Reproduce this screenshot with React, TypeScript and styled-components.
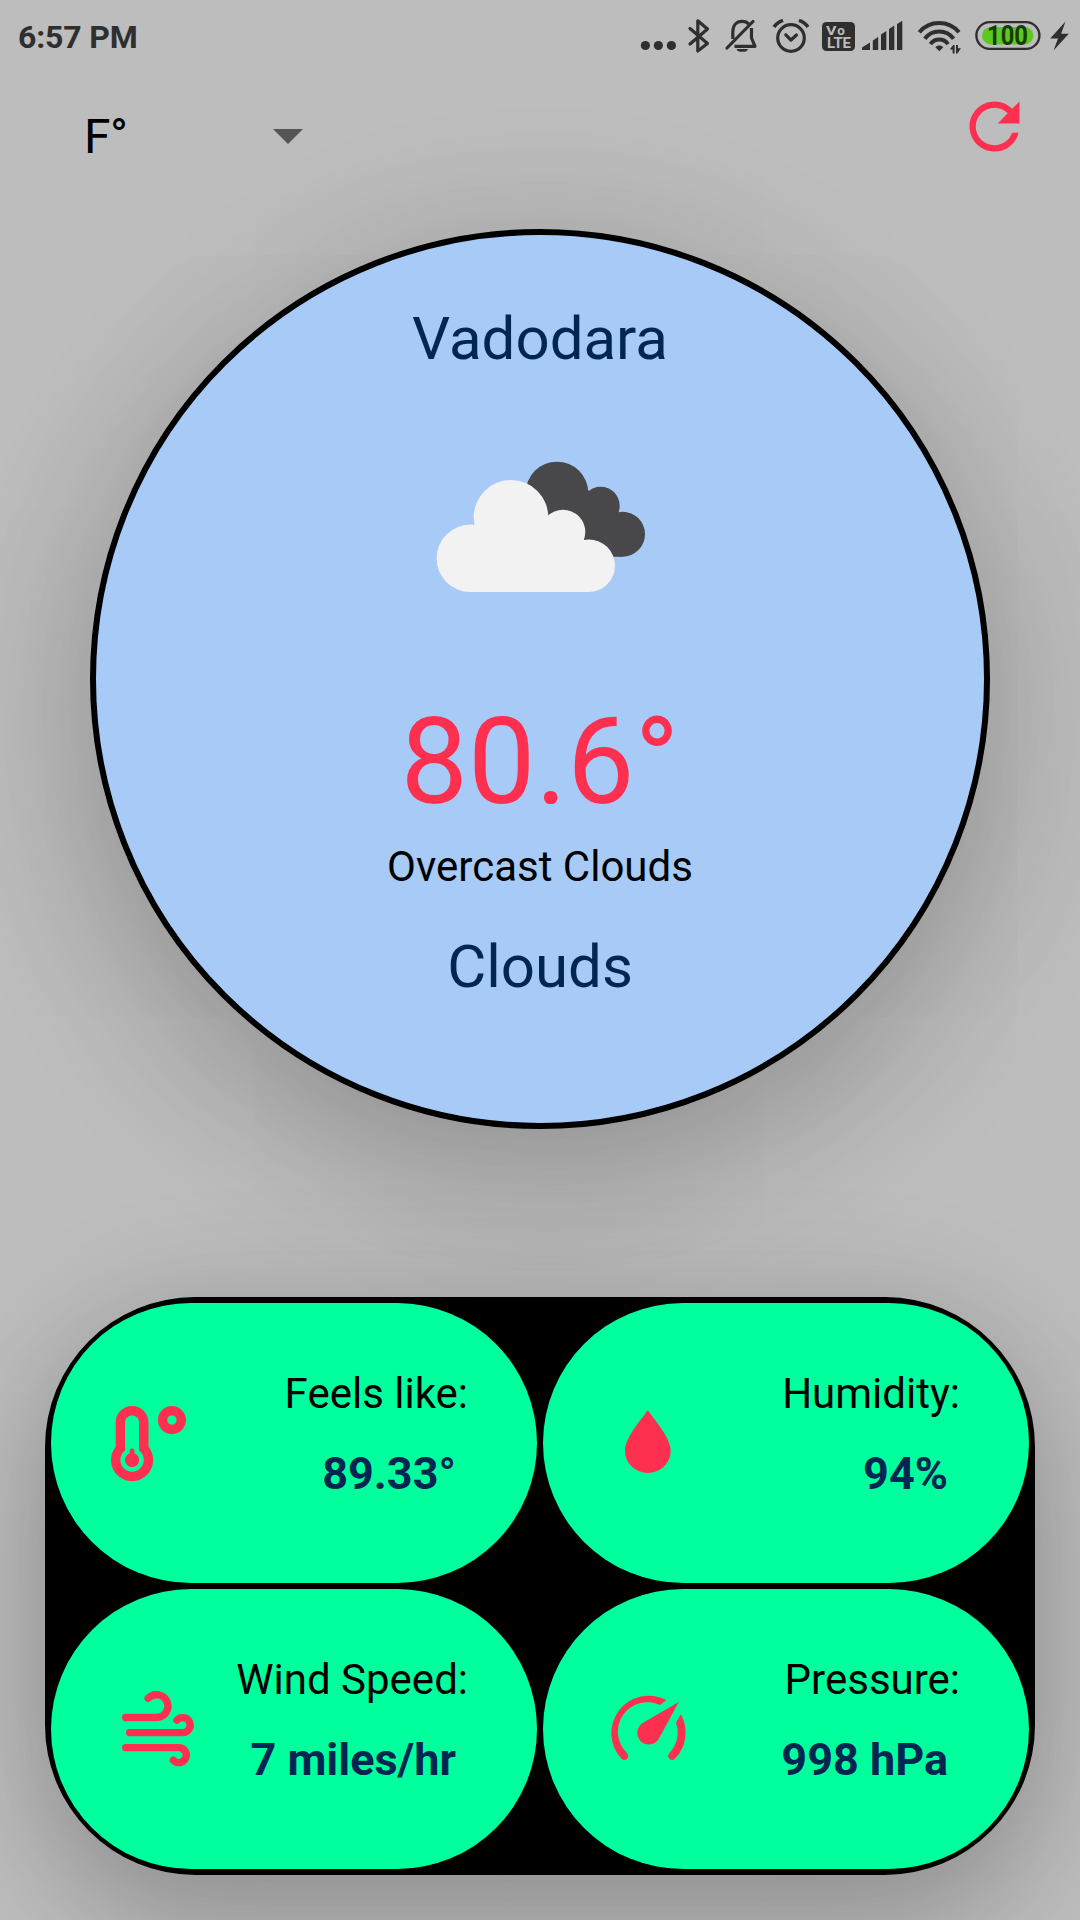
import React from "react";
import styled, { createGlobalStyle } from "styled-components";
import { MdArrowDropDown, MdRefresh } from "react-icons/md";
import { FaTemperatureLow } from "react-icons/fa";

const INK = "#2f2f2f";
const RED = "#ff304f";
const NAVY = "#002651";

const GlobalStyle = createGlobalStyle`
  * { box-sizing: border-box; }
  body { margin: 0; background: #bdbdbd; }
  svg { display: block; flex: none; }
`;

const Screen = styled.div`
  width: 1080px;
  height: 1920px;
  overflow: hidden;
  background: #bdbdbd;
  color: #000;
  font-family: Roboto, "Noto Sans", sans-serif;
  display: flex;
  flex-direction: column;
`;

const StatusBar = styled.header`
  height: 72px;
  padding: 0 11px 0 18px;
  display: flex;
  align-items: center;
  justify-content: space-between;
  color: ${INK};
`;

const Clock = styled.span`
  font-size: 32px;
  line-height: 38px;
  font-weight: 700;
  letter-spacing: -0.15px;
  padding-top: 1px;
`;

const StatusIcons = styled.div`
  display: flex;
  align-items: center;
`;

const Toolbar = styled.div`
  height: 157px;
  padding: 17px 48px 0 84px;
  display: flex;
  justify-content: space-between;
  align-items: flex-start;
`;

const UnitSelect = styled.button`
  width: 240px;
  height: 72px;
  margin-top: 10px;
  padding: 0;
  border: 0;
  background: none;
  display: flex;
  align-items: center;
  justify-content: space-between;
  font: inherit;
  font-size: 48px;
  line-height: 56px;
  color: #000;
`;

const Unit = styled.span`
  padding-top: 3px;
  letter-spacing: -0.5px;
`;

const RefreshButton = styled.button`
  padding: 0;
  border: 0;
  background: none;
  color: ${RED};
`;

const Disc = styled.main`
  width: 900px;
  height: 900px;
  flex: none;
  align-self: center;
  border: 6px solid #000;
  border-radius: 50%;
  background: #a7caf7;
  box-shadow: 0 60px 160px rgba(0, 0, 0, 0.16), 0 10px 160px rgba(0, 0, 0, 0.11);
  display: flex;
  flex-direction: column;
  align-items: center;
  padding-top: 69px;
`;

const Title = styled.div`
  font-size: 60px;
  line-height: 70px;
  color: ${NAVY};
`;

const Temperature = styled.div`
  font-size: 120px;
  line-height: 140px;
  margin-top: 15px;
  color: ${RED};
`;

const Description = styled.div`
  font-size: 42px;
  line-height: 49px;
  margin: 10px 0 41px;
`;

const Panel = styled.section`
  width: 990px;
  height: 578px;
  flex: none;
  align-self: center;
  margin-top: 168px;
  padding: 6px;
  background: #000;
  border-radius: 150px;
  box-shadow: 0 65px 120px rgba(0, 0, 0, 0.16), 0 0 120px rgba(0, 0, 0, 0.13);
  display: grid;
  grid-template-columns: 1fr 1fr;
  grid-template-rows: 1fr 1fr;
  gap: 6px;
`;

const Tile = styled.article`
  border-radius: 140px;
  background: #00ff9d;
  padding-right: 69px;
  display: flex;
  align-items: center;
  justify-content: space-between;
`;

const TileIcon = styled.div<{ $inset: number }>`
  margin-left: ${(p) => p.$inset}px;
  color: ${RED};
`;

const TileText = styled.div`
  display: flex;
  flex-direction: column;
  align-items: flex-end;
  align-self: flex-start;
  padding-top: 66px;
  white-space: nowrap;
`;

const Label = styled.div`
  font-size: 42px;
  line-height: 49px;
`;

const Value = styled.div`
  font-size: 45px;
  line-height: 53px;
  font-weight: 700;
  margin: 29px 12px 0 0;
  color: ${NAVY};
`;

/* Status glyphs share one 72px-high coordinate strip, sliced by x range. */
const Glyph = ({ x, w, children }: { x: number; w: number; children: React.ReactNode }) => (
  <svg width={w} height={72} viewBox={`${x} 0 ${w} 72`} fill="none" stroke="none">
    {children}
  </svg>
);

const line = { stroke: INK, strokeWidth: 3.2, strokeLinecap: "round", strokeLinejoin: "round" } as const;

const StatusGlyphs = () => (
  <StatusIcons>
    <Glyph x={640} w={42}>
      <g fill={INK}>
        <circle cx="645.4" cy="45.5" r="4.6" />
        <circle cx="658.4" cy="45.5" r="4.6" />
        <circle cx="671.4" cy="45.5" r="4.6" />
      </g>
    </Glyph>
    <Glyph x={682} w={36}>
      <path {...line} d="M690 28.5 707.5 43.5 697.8 51V20.8L707.5 29 690 44" />
    </Glyph>
    <Glyph x={718} w={48}>
      <path {...line} d="M727 48 753 21.5" />
      <path {...line} strokeLinecap="butt" d="M732.8 39V32C732.8 25.5 736.5 21.4 742 21.4C745 21.4 747.5 22.5 749 24.2M751.5 28V38L755 46.3H734.5" />
      <path fill={INK} d="M736.5 49h11.5a5.8 3.3 0 0 1-11.5 0z" />
    </Glyph>
    <Glyph x={766} w={50}>
      <circle cx="791" cy="38" r="13.3" {...line} />
      <path {...line} d="M785.8 34.8 791 40 796.5 35" />
      <path {...line} strokeWidth={3.6} strokeLinecap="butt" d="M774 27C776 24 779 21.8 783 20.4M799 20.4C803 21.8 806 24 808 27" />
    </Glyph>
    <Glyph x={816} w={42}>
      <rect x="822" y="22" width="33" height="29" rx="4.5" fill={INK} />
      <g fill="#bcbcbc" fontFamily="Roboto, sans-serif" fontWeight="700">
        <text x="826" y="35" fontSize="13.5" textLength="10.5" lengthAdjust="spacingAndGlyphs">V</text>
        <text x="837.2" y="35" fontSize="13.5">o</text>
        <text x="827" y="47.6" fontSize="14" textLength="24" lengthAdjust="spacingAndGlyphs">LTE</text>
      </g>
    </Glyph>
    <Glyph x={858} w={54}>
      <path
        fill={INK}
        d="M862 50V47.5L870 42.5V50zM872.8 50V40.5L878.2 37V50zM881 50V34.5L886.3 31V50zM889 50V29L894.3 25.5V50zM897 50V24L902.3 20.8V50z"
      />
    </Glyph>
    <Glyph x={912} w={56}>
      <g stroke={INK} strokeWidth="4">
        <path d="M919.3 32.3A26 26 0 0 1 959 32.3" />
        <path d="M924.8 38.7A17.9 17.9 0 0 1 953.6 38.7" />
        <path d="M930.5 44.2A10.6 10.6 0 0 1 948 44.2" />
      </g>
      <path fill={INK} d="M935.3 47.3C937.3 44.8 941.3 44.8 943.3 47.3L939.3 51.2z" />
      <path fill={INK} d="M952.6 53.5h2V45h-1.4L949.8 49.5h2.8zM956 45h2v3.2h3L957.4 53.5H956z" />
    </Glyph>
    <Glyph x={968} w={78}>
      <rect x="976.4" y="22.1" width="63" height="26.8" rx="13.4" stroke={INK} strokeWidth="2.4" />
      <rect x="982" y="27" width="51.4" height="17.4" rx="8.7" fill="#5dc820" />
      <text x="987" y="45.2" fontSize="27" fontWeight="700" fontFamily="Roboto, sans-serif" fill="#1b3a0a" textLength="41" lengthAdjust="spacingAndGlyphs">
        100
      </text>
    </Glyph>
    <Glyph x={1046} w={23}>
      <path fill={INK} d="M1065.5 21.5 1050.2 38.5H1058L1053.5 50.5 1068.8 33.7H1061.2z" />
    </Glyph>
  </StatusIcons>
);

const CloudsPicture = () => (
  <svg width={300} height={303} viewBox="390 374 300 303">
    <g fill="#48484a">
      <circle cx="557" cy="493" r="31.3" />
      <circle cx="600.7" cy="505.7" r="19" />
      <circle cx="622.5" cy="534.2" r="22.5" />
      <path d="M540 490H588L612 515 622.5 556.7H560z" />
    </g>
    <g fill="#f2f2f2">
      <circle cx="470.3" cy="558.3" r="33.7" />
      <circle cx="511" cy="517.3" r="37.3" />
      <circle cx="563" cy="532" r="22.3" />
      <circle cx="588.7" cy="565.7" r="26.3" />
      <path d="M470.3 592V540L480 520H560L584 540 588.7 592z" />
    </g>
  </svg>
);

const DropIcon = () => (
  <svg width={80} height={80} viewBox="608 1403 80 80" fill="currentColor">
    <path d="M647.8 1410C653.5 1419 670.7 1437 670.7 1451A22.85 22 0 0 1 625 1451C625 1437 642 1419 647.8 1410z" />
  </svg>
);

const WindIcon = () => (
  <svg width={80} height={80} viewBox="120 1689 80 80" fill="none" stroke="currentColor" strokeWidth={7.4} strokeLinecap="round">
    <path d="M125.7 1717.5H156A11.4 11.4 0 1 0 148.2 1698.3" />
    <path d="M129.6 1732.6H182.6A7.5 7.5 0 1 0 177 1720.2" />
    <path d="M125.7 1747.6H178.8A7.5 7.5 0 1 1 173.3 1760.2" />
  </svg>
);

const GaugeIcon = () => (
  <svg width={80} height={80} viewBox="608 1689 80 80" fill="currentColor">
    <path d="M666.4 1700A37.5 37.5 0 0 0 621.7 1759A4 4 0 0 0 627.3 1753.4A29.5 29.5 0 0 1 660 1705.1z" />
    <path d="M680.8 1714.3A37.5 37.5 0 0 1 674.7 1759A4 4 0 0 1 669.1 1753.4A29.5 29.5 0 0 0 676 1722.7z" />
    <path d="M678.8 1702 659.5 1737.5A11.6 11.6 0 1 1 643.5 1722.6z" />
  </svg>
);

const tiles = [
  { label: "Feels like:", value: "89.33°", inset: 60, icon: <FaTemperatureLow size={75} /> },
  { label: "Humidity:", value: "94%", inset: 65, icon: <DropIcon /> },
  { label: "Wind Speed:", value: "7 miles/hr", inset: 69, icon: <WindIcon /> },
  { label: "Pressure:", value: "998 hPa", inset: 65, icon: <GaugeIcon /> },
];

export default function App() {
  return (
    <Screen>
      <GlobalStyle />
      <StatusBar>
        <Clock>6:57 PM</Clock>
        <StatusGlyphs />
      </StatusBar>
      <Toolbar>
        <UnitSelect>
          <Unit>F°</Unit>
          <MdArrowDropDown size={72} color="#555" />
        </UnitSelect>
        <RefreshButton aria-label="Refresh">
          <MdRefresh size={75} />
        </RefreshButton>
      </Toolbar>
      <Disc>
        <Title>Vadodara</Title>
        <CloudsPicture />
        <Temperature>80.6°</Temperature>
        <Description>Overcast Clouds</Description>
        <Title>Clouds</Title>
      </Disc>
      <Panel>
        {tiles.map((t) => (
          <Tile key={t.label}>
            <TileIcon $inset={t.inset}>{t.icon}</TileIcon>
            <TileText>
              <Label>{t.label}</Label>
              <Value>{t.value}</Value>
            </TileText>
          </Tile>
        ))}
      </Panel>
    </Screen>
  );
}
